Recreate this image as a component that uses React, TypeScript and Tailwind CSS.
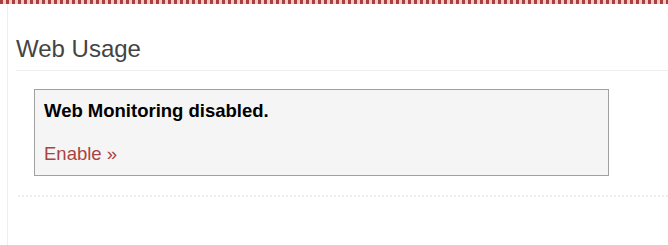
const App = () => {
  return (
    <div className="min-h-[245px] w-[668px] bg-white font-['Liberation_Sans',Arial,sans-serif]">
      {/* dotted top band */}
      <div className="h-[4px] w-full bg-[repeating-linear-gradient(90deg,#a8403f_0px,#a8403f_3px,#f3c9c6_3px,#f3c9c6_6px)]" />

      <div className="ml-[7px] min-h-[241px] border-l border-[#eeeeee] pl-[8px]">
        <div className="pt-[30px]">
          <h2 className="pb-[6px] text-[24px] font-normal leading-[30px] text-[#444444]">Web Usage</h2>
          <div className="h-px bg-[#eeeeee]" />
        </div>

        <div className="px-[18px] pt-[18px]">
          <div className="w-[575px] border border-[#a0a0a0] bg-[#f5f5f5] px-[9px] pb-[10px] pt-[10px]">
            <p className="text-[18.5px] font-bold leading-[22px] text-black">Web Monitoring disabled.</p>
            <a href="#" className="mt-[21px] block text-[18.5px] leading-[22px] text-[#a94442]">
              Enable »
            </a>
          </div>
        </div>

        <div className="mt-[19px] ml-[2px] border-t-2 border-dotted border-[#eeeeee]" />
      </div>
    </div>
  );
};

export default App;
